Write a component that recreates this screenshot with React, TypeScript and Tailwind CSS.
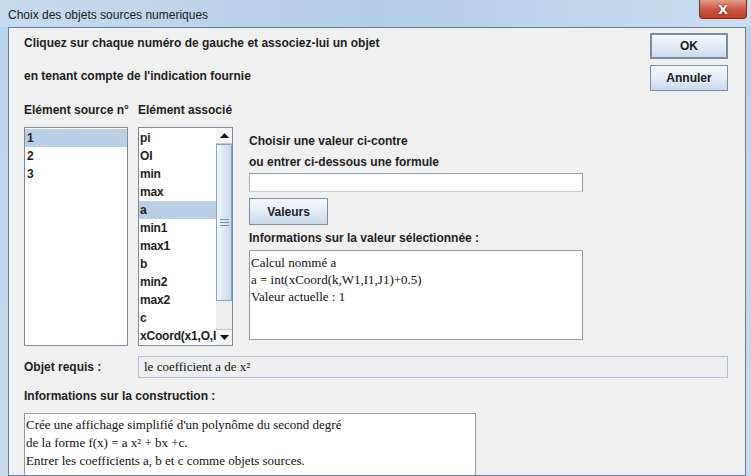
import React from "react";

const sans = { fontFamily: '"Liberation Sans", Arial, sans-serif' };
const serif = { fontFamily: '"Liberation Serif", "Times New Roman", serif' };

function JButton({ label, def }: { label: string; def?: boolean }) {
  return (
    <div
      className={`flex items-center justify-center w-[78px] h-[26px] bg-gradient-to-b from-[#f6f9fc] via-[#e3ecf6] to-[#c9daec] text-[12px] font-bold text-[#1a1a1a] ${
        def ? "border-2 border-[#7b8c9c]" : "border border-[#7b8c9c]"
      }`}
      style={sans}
    >
      {label}
    </div>
  );
}

export default function App() {
  const left = ["1", "2", "3"];
  const right = ["pi", "OI", "min", "max", "a", "min1", "max1", "b", "min2", "max2", "c", "xCoord(x1,O,I"];
  return (
    <div className="w-[751px] h-[476px] overflow-hidden bg-gradient-to-b from-[#b9d3ec] to-[#c8dcf0] flex flex-col" style={sans}>
      {/* title bar */}
      <div className="h-[27px] flex items-start justify-between shrink-0 bg-gradient-to-r from-[#c6dbef] via-[#b3cde6] to-[#c9def2]">
        <div className="pl-[8px] pt-[6px] text-[12px] text-[#1b1b1b]" style={sans}>
          Choix des objets sources numeriques
        </div>
        <div className="mr-[4px] w-[48px] h-[19px] rounded-b-[4px] border border-t-0 border-[#7e2d22] bg-gradient-to-b from-[#e39a8d] via-[#cf5843] to-[#bd3f2a] flex items-center justify-center">
          <span className="text-white font-bold text-[13px] leading-none [text-shadow:0_0_2px_#3a1a14]" style={{ fontFamily: '"DejaVu Sans", sans-serif' }}>
            X
          </span>
        </div>
      </div>

      {/* content */}
      <div className="ml-[8px] w-[738px] flex-1 border border-[#6b7f94] bg-[#f0f0f0] text-[#1e1e1e] flex flex-col pl-[15px]">
        <div className="flex">
          <div className="flex-1 flex flex-col">
            <div className="mt-[7px] h-[16px] leading-[16px] text-[12px] font-bold">Cliquez sur chaque numéro de gauche et associez-lui un objet</div>
            <div className="mt-[17px] h-[16px] leading-[16px] text-[12px] font-bold">en tenant compte de l'indication fournie</div>
            <div className="mt-[18px] h-[16px] leading-[16px] text-[12px] font-bold flex">
              <span className="w-[114px]">Elément source n°</span>
              <span>Elément associé</span>
            </div>
            <div className="mt-[9px] flex items-start">
              {/* left list */}
              <div className="w-[104px] h-[219px] border border-[#7a8a99] bg-white pt-[1px]">
                {left.map((t, i) => (
                  <div key={t} className={`h-[18px] leading-[18px] pl-[2px] text-[12px] font-bold ${i === 0 ? "bg-[#b9cfe5]" : ""}`}>
                    {t}
                  </div>
                ))}
              </div>
              {/* right list */}
              <div className="ml-[10px] w-[95px] h-[219px] border border-[#7a8a99] bg-white flex">
                <div className="flex-1 pt-[1px] overflow-hidden">
                  {right.map((t) => (
                    <div key={t} className={`h-[18px] leading-[18px] pl-[1px] text-[12px] font-bold whitespace-nowrap tracking-[-0.2px] ${t === "a" ? "bg-[#b9cfe5]" : ""}`}>
                      {t}
                    </div>
                  ))}
                </div>
                <div className="w-[16px] flex flex-col bg-[#ececec]">
                  <div className="h-[16px] flex items-center justify-center bg-[#f3f3f3] border-b border-[#b5c4d4]">
                    <svg width="9" height="5" viewBox="0 0 9 5"><path d="M0 5 L4.5 0 L9 5 Z" fill="#111" /></svg>
                  </div>
                  <div className="h-[157px] border border-[#86a2c4] bg-gradient-to-r from-[#f3f8fd] via-[#d9e7f5] to-[#c6d9ee] flex flex-col items-center justify-center gap-[2px]">
                    <div className="w-[9px] h-[1px] bg-[#6f8fb8]" />
                    <div className="w-[9px] h-[1px] bg-[#6f8fb8]" />
                    <div className="w-[9px] h-[1px] bg-[#6f8fb8]" />
                  </div>
                  <div className="flex-1" />
                  <div className="h-[16px] flex items-center justify-center bg-[#f3f3f3] border-t border-[#c9c9c9]">
                    <svg width="9" height="5" viewBox="0 0 9 5"><path d="M0 0 L4.5 5 L9 0 Z" fill="#111" /></svg>
                  </div>
                </div>
              </div>
              {/* right panel */}
              <div className="ml-[16px] flex flex-col">
                <div className="mt-[6px] h-[16px] leading-[16px] text-[12px] font-bold">Choisir une valeur ci-contre</div>
                <div className="mt-[5px] h-[16px] leading-[16px] text-[12px] font-bold">ou entrer ci-dessous une formule</div>
                <div className="mt-[3px] w-[334px] h-[19px] bg-white border border-[#8e9aa6] border-l-[#a8b0b8] border-b-[#c8ccd0]" />
                <div className="mt-[6px] flex items-center justify-center w-[79px] h-[27px] bg-gradient-to-b from-[#f6f9fc] via-[#e3ecf6] to-[#c9daec] border border-[#7b8c9c] text-[12px] font-bold">
                  Valeurs
                </div>
                <div className="mt-[5px] h-[16px] leading-[16px] text-[12px] font-bold">Informations sur la valeur sélectionnée :</div>
                <div className="mt-[4px] w-[334px] h-[90px] bg-white border border-[#8e9aa6] text-[13px] leading-[17px] text-[#111] pl-[1px] pt-[3px]" style={serif}>
                  <div>Calcul nommé a</div>
                  <div>a = int(xCoord(k,W1,I1,J1)+0.5)</div>
                  <div>Valeur actuelle : 1</div>
                </div>
              </div>
            </div>
          </div>
          <div className="w-[78px] mr-[17px] mt-[5px] flex flex-col gap-[6px]">
            <JButton label="OK" def />
            <JButton label="Annuler" />
          </div>
        </div>

        <div className="mt-[10px] flex items-center">
          <div className="w-[114px] text-[12px] font-bold">Objet requis :</div>
          <div className="w-[590px] h-[22px] border border-[#a9c2da] bg-[#eeeeee] pl-[5px] text-[13px] leading-[20px] text-[#111]" style={serif}>
            le coefficient a de x²
          </div>
        </div>

        <div className="mt-[10px] h-[16px] leading-[16px] text-[12px] font-bold">Informations sur la construction :</div>
        <div className="mt-[9px] w-[452px] flex-1 bg-white border border-[#8e9aa6] border-b-0 text-[13px] leading-[18px] text-[#111] pt-[2px] pl-[1px]" style={serif}>
          <div>Crée une affichage simplifié d'un polynôme du second degré</div>
          <div>de la forme f(x) = a x² + bx +c.</div>
          <div>Entrer les coefficients a, b et c comme objets sources.</div>
        </div>
      </div>
    </div>
  );
}
